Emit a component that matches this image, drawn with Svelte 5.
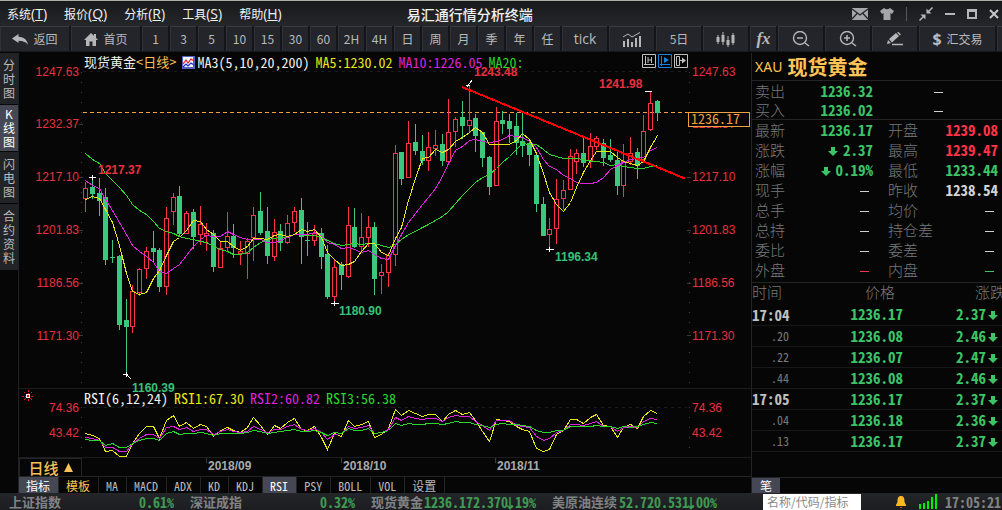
<script>
  const menus = [
    ['系统', 'T'], ['报价', 'Q'], ['分析', 'R'], ['工具', 'S'], ['帮助', 'H']
  ];
  const periods = ['1', '3', '5', '10', '15', '30', '60', '2H', '4H', '日', '周', '月', '季', '年', '任'];
  const views = ['分时图', 'K线图', '闪电图', '合约资料'];
  const indicators = ['指标', '模板', 'MA', 'MACD', 'ADX', 'KD', 'KDJ', 'RSI', 'PSY', 'BOLL', 'VOL', '设置'];

  // One row per trading day: wick top, body top, body bottom, wick bottom, rising.
  const candles = [
    [182, 188, 199, 212, 1], [177, 187, 194, 199, 0], [178, 193, 201, 216, 0], [188, 197, 260, 265, 0],
    [240, 257, 258, 263, 0], [255, 256, 325, 330, 0], [299, 320, 327, 374, 0], [285, 291, 327, 333, 1],
    [268, 269, 293, 296, 1], [247, 251, 269, 279, 1], [231, 248, 252, 262, 0], [248, 250, 287, 292, 0],
    [207, 218, 287, 295, 1], [193, 197, 212, 225, 1], [186, 196, 234, 237, 0], [211, 213, 234, 234, 1],
    [209, 212, 237, 249, 0], [206, 224, 235, 245, 1], [223, 233, 236, 251, 1], [230, 233, 267, 272, 0],
    [241, 248, 268, 268, 1], [212, 236, 248, 252, 1], [224, 236, 248, 258, 0], [241, 251, 254, 265, 1],
    [238, 241, 254, 279, 1], [207, 215, 238, 261, 1], [192, 211, 233, 235, 0], [207, 231, 256, 264, 0],
    [219, 232, 257, 261, 1], [224, 231, 243, 251, 0], [215, 223, 243, 244, 1], [207, 211, 223, 232, 1],
    [198, 210, 237, 264, 0], [222, 240, 241, 256, 0], [225, 233, 241, 246, 1], [228, 233, 257, 269, 0],
    [245, 254, 297, 299, 0], [259, 267, 297, 302, 1], [262, 264, 275, 290, 0], [207, 225, 277, 278, 1],
    [208, 227, 247, 248, 0], [213, 237, 247, 251, 1], [216, 227, 238, 247, 1], [222, 227, 279, 295, 0],
    [264, 272, 276, 294, 1], [253, 255, 273, 287, 1], [145, 153, 255, 266, 1], [152, 152, 179, 185, 0],
    [121, 143, 178, 178, 1], [124, 142, 151, 155, 0], [135, 151, 161, 165, 0], [132, 147, 161, 171, 1],
    [130, 145, 149, 156, 1], [134, 144, 161, 166, 0], [99, 132, 162, 162, 1], [117, 119, 132, 147, 1],
    [101, 117, 126, 139, 0], [86, 120, 126, 132, 1], [114, 118, 136, 152, 0], [132, 132, 158, 167, 0],
    [156, 157, 187, 195, 0], [107, 121, 186, 186, 1], [111, 120, 124, 134, 0], [114, 121, 129, 143, 0],
    [113, 126, 143, 155, 0], [113, 141, 146, 157, 0], [142, 143, 155, 166, 0], [153, 155, 204, 212, 0],
    [197, 204, 236, 236, 0], [218, 229, 235, 249, 1], [179, 199, 229, 244, 1], [180, 190, 199, 209, 1],
    [149, 156, 190, 190, 1], [149, 153, 162, 174, 1], [138, 153, 163, 167, 0], [133, 146, 161, 168, 1],
    [136, 138, 147, 150, 1], [139, 143, 158, 166, 0], [139, 155, 160, 162, 0], [152, 160, 186, 195, 0],
    [144, 161, 186, 197, 1], [137, 153, 162, 165, 1], [148, 152, 166, 179, 0], [115, 131, 160, 160, 1],
    [91, 103, 130, 131, 1], [100, 101, 113, 121, 0]
  ];

  const averages = [
    ['#2bd72b', [153,159,163,173,180,187,195,204,210,214,221,228,231,233,236,238,239,241,242,246,249,251,254,254,252,247,242,239,238,237,237,234,234,235,235,237,240,243,245,244,243,244,243,243,245,247,244,239,234,231,227,224,220,216,211,203,195,188,182,177,174,168,162,156,149,143,144,144,149,154,156,158,158,158,159,161,161,162,165,164,166,167,168,168,166,165]],
    ['#dd22dd', [180,185,188,199,210,222,234,245,251,256,262,271,273,268,264,255,246,239,235,236,236,231,234,237,239,239,239,242,242,240,237,234,234,234,232,236,242,244,248,247,249,252,250,254,258,259,245,234,222,213,204,197,188,176,163,150,146,140,139,141,142,141,139,135,136,137,141,147,159,166,169,175,178,182,183,183,182,177,169,165,162,159,158,157,150,147]],
    ['#e6e619', [199,196,198,209,222,245,273,291,294,292,278,270,255,241,237,230,220,221,229,234,241,241,246,250,246,238,238,239,235,234,236,234,229,231,229,237,252,259,265,264,261,251,243,243,252,255,238,227,200,178,158,157,149,152,149,141,137,132,127,132,144,144,144,144,140,133,139,153,173,192,204,211,202,187,172,160,151,151,151,157,161,163,165,161,147,135]]
  ];

  const strengths = [
    ['#e6e619', [433,435,438,451,450,456,456,443,433,426,426,438,420,415,426,422,428,424,426,436,430,427,430,432,427,417,425,434,425,428,422,418,429,430,426,437,449,433,436,420,426,424,421,437,434,428,409,415,410,413,416,414,414,421,414,410,414,412,420,431,441,419,420,421,426,429,431,448,451,449,434,430,419,419,423,417,414,425,426,437,427,424,428,416,410,413]],
    ['#dd22dd', [437,438,440,447,447,451,451,443,438,434,434,438,427,426,429,427,431,429,429,434,431,429,431,432,431,426,429,432,429,429,426,424,429,430,428,432,439,434,433,426,428,427,425,433,432,429,417,420,416,418,419,418,418,421,417,415,416,416,421,425,430,420,420,420,425,426,427,436,440,438,432,430,424,424,425,423,421,426,426,431,427,426,427,421,418,419]],
    ['#2bd72b', [439,440,440,445,443,447,447,443,440,438,438,440,433,431,434,433,433,432,433,435,433,433,433,433,432,430,431,433,432,431,430,429,431,431,430,432,435,432,433,428,430,430,428,433,432,430,423,425,423,424,424,423,423,424,423,421,422,422,424,425,427,424,423,424,424,425,426,430,432,432,430,430,426,426,426,426,425,426,426,428,426,427,426,424,422,423]]
  ];

  const dayX = (i) => Math.round(85.3 + 6.725 * i);
  const points = (ys) => ys.map((y, i) => `${dayX(i) + 0.5},${y + 0.5}`).join(' ');

  const scale = [
    ['1247.63', 76], ['1232.37', 128], ['1217.10', 181], ['1201.83', 234],
    ['1186.56', 287], ['1171.30', 340], ['74.36', 412], ['43.42', 437]
  ];
  const extremes = [
    ['1217.37', 98, 174, 'up'], ['1243.48', 474, 76, 'up'], ['1241.98', 599, 88, 'up'],
    ['1180.90', 339, 315, 'down'], ['1196.34', 555, 261, 'down'], ['1160.39', 132, 392, 'down']
  ];

  const quote = [
    ['最新', '1236.17', 'down', '开盘', '1239.08', 'up'],
    ['涨跌', '2.37', 'down arrow', '最高', '1239.47', 'up'],
    ['涨幅', '0.19%', 'down arrow', '最低', '1233.44', 'down'],
    ['现手', '', '', '昨收', '1238.54', 'flat'],
    ['总手', '', '', '均价', '', ''],
    ['总持', '', '', '持仓差', '', ''],
    ['委比', '', '', '委差', '', ''],
    ['外盘', '', 'up', '内盘', '', 'down']
  ];
  const ticks = [
    ['17:04', '1236.17', '2.37'], ['.20', '1236.08', '2.46'], ['.22', '1236.07', '2.47'],
    ['.44', '1236.08', '2.46'], ['17:05', '1236.17', '2.37'], ['.04', '1236.18', '2.36'],
    ['.13', '1236.17', '2.37']
  ];
</script>

{#snippet fall()}
  <svg class="fall" width="10" height="9" viewBox="0 0 10 9" aria-hidden="true"><path d="M3 0h4v4h3L5 9 0 4h3z" fill="#3cc466" /></svg>
{/snippet}

{#snippet figure(value, tone)}
  {#if value}
    {#if tone.includes('arrow')}{@render fall()}{/if}
    <b class={tone.split(' ')[0]}>{value}</b>
  {:else}
    <i class="dash {tone}"></i>
  {/if}
{/snippet}

<div class="terminal">
  <header class="titlebar">
    <nav class="menu">
      {#each menus as [name, key]}
        <button>{name}<span>(<u>{key}</u>)</span></button>
      {/each}
    </nav>
    <h1>易汇通行情分析终端</h1>
    <div class="window-tools">
      <button aria-label="邮件"><svg width="16" height="12" viewBox="0 0 16 12"><rect width="16" height="12" fill="#a4a6aa" /><path d="M0 1l8 6 8-6M0 11l5.500-6M16 11l-5.500-6" fill="none" stroke="#222427" stroke-width="1.300" /></svg></button>
      <button aria-label="皮肤"><svg width="14" height="12" viewBox="0 0 14 12"><path d="M4 0q3 2.500 6 0l4 3-2 3-1.500-1V12h-7V5L2 6 0 3z" fill="#a4a6aa" /></svg></button>
      <span class="rule"></span>
      <button aria-label="还原"><svg width="14" height="14" viewBox="0 0 14 14"><path d="M13.500.5L9 5M.5 13.500L5 9" stroke="#b4b6b8" stroke-width="1.500" /><path d="M7.500 1.500v5h5zM6.500 12.500v-5h-5z" fill="#b4b6b8" /></svg></button>
      <button aria-label="最小化"><svg width="10" height="10" viewBox="0 0 10 10"><path d="M0 4h10v2H0z" fill="#b4b6b8" /></svg></button>
      <button aria-label="最大化"><svg width="10" height="10" viewBox="0 0 10 10"><path d="M0 0h10v10H0zM2 3v5h6V3z" fill="#b4b6b8" fill-rule="evenodd" /></svg></button>
      <button aria-label="关闭"><svg width="10" height="10" viewBox="0 0 10 10"><path d="M1 1l8 8M9 1L1 9" stroke="#c4c6c8" stroke-width="2" /></svg></button>
    </div>
  </header>

  <div class="toolbar">
    <button class="wide"><svg width="16" height="11" viewBox="0 0 16 11"><path d="M0 4.500L6.500 0v2.700c5 .2 8.500 2.500 9.500 8-2.500-3-5-4-9.500-4V9z" fill="#b4b6b8" /></svg>返回</button>
    <button class="wide"><svg width="14" height="13" viewBox="0 0 14 13"><path d="M7 0l3 2.800V1h2v3.700L14 7h-2v6H8.500V8.500h-3V13H2V7H0z" fill="#b4b6b8" /></svg>首页</button>
    {#each periods as period}
      <button>{period}</button>
    {/each}
    <button class="mid tick">tick</button>
    <button class="mid" aria-label="指标图"><svg width="20" height="15" viewBox="0 0 20 15"><path d="M2 15V9M6 15V7M10 15v-5M14 15V6M18 15V4" stroke="#b4b6b8" stroke-width="2" /><path d="M1 5l5-3 4 3 8-4.500" fill="none" stroke="#b4b6b8" /></svg></button>
    <button class="mid">5日</button>
    <button class="mid" aria-label="K线"><svg width="20" height="15" viewBox="0 0 20 15"><path d="M2 3v9M7 0v13M12 4v11M17 1v12" stroke="#b4b6b8" /><path d="M2 5v5M7 3v7M12 8v5M17 3v8" stroke="#b4b6b8" stroke-width="3" /></svg></button>
    <button class="fx">fx</button>
    <button class="mid" aria-label="缩小"><svg width="18" height="16" viewBox="0 0 18 16"><circle cx="8" cy="7" r="6.500" fill="none" stroke="#b4b6b8" stroke-width="1.400" /><path d="M5 7h6M13 12l4 3" stroke="#b4b6b8" stroke-width="1.500" /></svg></button>
    <button class="mid" aria-label="放大"><svg width="18" height="16" viewBox="0 0 18 16"><circle cx="8" cy="7" r="6.500" fill="none" stroke="#b4b6b8" stroke-width="1.400" /><path d="M5 7h6M8 4v6M13 12l4 3" stroke="#b4b6b8" stroke-width="1.500" /></svg></button>
    <button class="mid" aria-label="画线"><svg width="16" height="14" viewBox="0 0 16 14"><path d="M0 12l1-4 3 3zM2 7l7-6 3 3-7 6.500z" fill="#b4b6b8" /><path d="M10 0.500l1.500-.5L14 2.500l-1.200 1z" fill="#b4b6b8" /><path d="M5 12.500h11" stroke="#b4b6b8" stroke-width="1.500" /></svg></button>
    <button class="trade"><b>$</b>汇交易</button>
    <button class="rest" aria-label="更多"></button>
  </div>

  <div class="workspace">
    <nav class="views">
      {#each views as view}
        <button class:active={view === 'K线图'}>{#each [...view] as char}<span>{char}</span>{/each}</button>
      {/each}
    </nav>

    <main>
      <div class="chart">
        <svg class="plot" viewBox="19 53 732 405" role="img" aria-label="现货黄金日线">
          <g shape-rendering="crispEdges">
            <g stroke="#1c1c1f" fill="none">
              <path d="M83 71.500H687M83 407.500H687" stroke-dasharray="3 4" />
              <path d="M19 388.500H751M19 457.500H751" />
              <path d="M81.500 72V388M689.500 72V388M81.500 407V456M689.500 407V456" stroke-dasharray="1 9" stroke="#3a3a3e" />
              <path d="M79 124.500h4M79 177.500h4M79 230.500h4M79 283.500h4M79 335.500h4M687 177.500h4M687 230.500h4M687 283.500h4M687 335.500h4" stroke="#3a3a3e" />
            </g>
            <path d="M83 112.500H688" stroke="#f0a040" stroke-dasharray="4 3" />
            {#each candles as [high, top, bottom, low, rising], i}
              {#if rising}
                <rect x={dayX(i)} y={high} width="1" height={top - high} fill="#ff3348" />
                <rect x={dayX(i)} y={bottom} width="1" height={low - bottom} fill="#ff3348" />
                <rect x={dayX(i) - 1.5} y={top + 0.5} width="4" height={bottom - top - 1} fill="none" stroke="#ff3348" />
              {:else}
                <rect x={dayX(i)} y={high} width="1" height={low - high} fill="#3cc87c" />
                <rect x={dayX(i) - 2} y={top} width="5" height={bottom - top} fill="#3cc87c" />
              {/if}
            {/each}
            {#each [...averages, ...strengths] as [colour, ys]}
              <polyline points={points(ys)} fill="none" stroke={colour} />
            {/each}
            <path d="M462 87L685 178.500" stroke="#ff0000" stroke-width="2" />
            <g stroke="#ffffff" fill="none">
              <path d="M89 177.500h7M92.500 175v5M331 303.500h8M334.500 301v5M546 249.500h8M549.500 247v5M645 91.500h7M123 374.500h5M126.500 372v5M127 375l4 4M472 80l-5 7M466 85.500h4" />
            </g>
          </g>
          <g shape-rendering="crispEdges">
            <path d="M22 396h12M28 390v12M24 392l8 8M32 392l-8 8" stroke="#e01818" stroke-dasharray="2 1" />
            <rect x="26" y="394" width="4" height="4" fill="#ffffff" /><rect x="27" y="395" width="2" height="2" fill="#ff0000" />
          </g>
          {#each scale as [value, y]}
            <text class="up" x="79" {y} text-anchor="end">{value}</text>
            <text class="up" x="692" {y}>{value}</text>
          {/each}
          {#each extremes as [value, x, y, tone]}
            <text class="bold {tone}" {x} {y}>{value}</text>
          {/each}
          <rect x="688.500" y="112.500" width="61" height="14" fill="#060606" stroke="#f0a040" />
          <text class="last" x="691" y="124">1236.17</text>
        </svg>
        <div class="legend price">
          <span>现货黄金<span class="gold">&lt;日线&gt;</span></span>
          <svg width="13" height="13" viewBox="0 0 13 13" aria-hidden="true"><rect width="12" height="12" fill="#f4f4ff" stroke="#5560c0" stroke-width="2" /><path d="M1 8l3-4 2 3 3-4 3 2" fill="none" stroke="#e02020" stroke-width="1.200" /><path d="M1 11l3-3 2 2 3-3 3 2" fill="none" stroke="#2030d0" stroke-width="1.200" /></svg>
          <span class="mono">MA3(5,10,20,200)</span>
          <span class="mono yellow">MA5:1230.02</span>
          <span class="mono magenta">MA10:1226.05</span>
          <span class="mono green">MA20:</span>
        </div>
        <div class="pane-tools">
          <button aria-label="左缩放"><svg width="14" height="14" viewBox="0 0 14 14"><path d="M.5.5h13v13H.5z M3.500 2v9M2 10.500h10M6 3v6M9.500 3v6M6 6h3.500" fill="none" stroke="#c0c0c0" /></svg></button>
          <button aria-label="播放"><svg width="14" height="14" viewBox="0 0 14 14"><path d="M.5.5h13v13H.5z M3.500 2v10M2 10.500h10" fill="none" stroke="#1880d8" /><path d="M6 3v6l5-3z" fill="#1880d8" /></svg></button>
          <button aria-label="右移"><svg width="14" height="14" viewBox="0 0 14 14"><path d="M.5.5h13v13H.5z M2.500 2.500h3v9h-3zM5 6.500h6" fill="none" stroke="#c0c0c0" /><path d="M8 3.500v6l4-3z" fill="#c0c0c0" /></svg></button>
        </div>
        <div class="legend rsi">
          <span class="mono">RSI(6,12,24)</span>
          <span class="mono yellow">RSI1:67.30</span>
          <span class="mono magenta">RSI2:60.82</span>
          <span class="mono green">RSI3:56.38</span>
        </div>
      </div>
      <div class="timeline">
        <button>日线<svg width="9" height="9" viewBox="0 0 9 9" aria-hidden="true"><path d="M4.500 0L9 9H0z" fill="#f8c058" /></svg></button>
        <svg viewBox="82 458 669 18" preserveAspectRatio="xMinYMid meet" aria-label="时间轴">
          <path d="M206.500 458v5M341.500 458v5M495.500 458v5" stroke="#3a3a3e" />
          <text x="208" y="470">2018/09</text>
          <text x="343" y="470">2018/10</text>
          <text x="497" y="470">2018/11</text>
        </svg>
      </div>
      <nav class="tabs">
        {#each indicators as name}
          <button class:active={name === '指标' || name === 'RSI'} class:gold={name === '模板'} class:cjk={name > '~'}>{name}</button>
        {/each}
      </nav>
    </main>

    <aside>
      <h2><span>XAU</span>现货黄金</h2>
      <table class="quote deal">
        <tbody>
          <tr><th>卖出</th><td><b class="down">1236.32</b></td><td>{@render figure('', '')}</td></tr>
          <tr><th>买入</th><td><b class="down">1236.02</b></td><td>{@render figure('', '')}</td></tr>
        </tbody>
      </table>
      <table class="quote detail">
        <tbody>
          {#each quote as [left, value, tone, right, value2, tone2]}
            <tr>
              <th>{left}</th><td>{@render figure(value, tone)}</td>
              <th class="second">{right}</th><td>{@render figure(value2, tone2)}</td>
            </tr>
          {/each}
        </tbody>
      </table>
      <table class="ticks">
        <thead><tr><th>时间</th><th>价格</th><th>涨跌</th></tr></thead>
        <tbody>
          {#each ticks as [time, price, change]}
            <tr>
              <td class:minute={time.length > 3}>{time}</td>
              <td><b class="down">{price}</b></td>
              <td><b class="down">{change}</b>{@render fall()}</td>
            </tr>
          {/each}
        </tbody>
      </table>
      <div class="pens"><button>笔</button></div>
    </aside>
  </div>

  <footer>
    <div class="item"><span>上证指数</span><b>0.61%</b></div>
    <div class="item"><span>深证成指</span><b>0.32%</b></div>
    <div class="item"><span>现货黄金</span><b>1236.172.37<em>0</em>.19%</b></div>
    <div class="item"><span>美原油连续</span><b>52.720.53<em>1</em>.00%</b></div>
    <div class="extras">
      <input type="text" placeholder="名称/代码/指标" aria-label="名称/代码/指标" />
      <svg class="bell" width="12" height="12" viewBox="0 0 12 12" aria-hidden="true"><path d="M6 0c3 0 3.500 2.500 3.500 6L11 9v1H1V9l1.500-3C2.500 2.500 3 0 6 0z" fill="#ffb820" /><path d="M5 11h2v1H5z" fill="#e04020" /></svg>
      <svg class="signal" width="18" height="15" viewBox="0 0 18 15" aria-hidden="true"><path d="M1 15v-5M5 15V9M9 15V7M13 15V3M17 15V0" stroke="#00f000" stroke-width="2" /></svg>
      <time>17:05:21</time>
    </div>
  </footer>
</div>

<style>
  :global(body) {
    margin: 0;
    background: #060606;
  }
  .terminal {
    --cjk: "Noto Sans CJK SC", sans-serif;
    --mono: "Noto Sans Mono CJK SC", "Liberation Mono", monospace;
    --line: #242427;
    display: flex;
    flex-direction: column;
    height: 100vh;
    overflow: hidden;
    background: #060606;
    color: #b8babc;
    font: 12px/14px var(--cjk);
  }
  button {
    padding: 0;
    border: 0;
    background: none;
    color: inherit;
    font: inherit;
  }
  svg {
    display: block;
    flex: none;
  }
  h1, h2 {
    margin: 0;
  }
  .up { color: #ff3348; fill: #e8303f; }
  .down { color: #3cc466; fill: #38c078; }
  .flat { color: #d4d4d4; }
  .gold { color: #f8c058; }

  .titlebar {
    display: grid;
    grid-template-columns: 13fr auto 15fr;
    align-items: center;
    box-sizing: border-box;
    height: 26px;
    flex: none;
    border-top: 1px solid #a9b0aa;
    background: linear-gradient(#17191b, #24262a);
    color: #f0f0f0;
  }
  .menu {
    display: flex;
    gap: 17px;
    padding-left: 7px;
  }
  .menu button {
    white-space: nowrap;
  }
  .menu span {
    font: 14px/14px "Open Sans", sans-serif;
  }
  h1 {
    font: 500 14px/18px var(--cjk);
  }
  .window-tools {
    display: flex;
    align-items: center;
    justify-content: flex-end;
    gap: 12px;
    padding-right: 3px;
  }
  .rule {
    width: 1px;
    height: 14px;
    background: #55575a;
  }

  .toolbar {
    display: flex;
    gap: 2px;
    height: 25px;
    flex: none;
    overflow: hidden;
    border-bottom: 1px solid #17181b;
    background: #141518;
  }
  .toolbar button {
    display: flex;
    align-items: center;
    justify-content: center;
    flex: none;
    box-sizing: border-box;
    width: 26px;
    gap: 5px;
    border-top: 1px solid #3a3b40;
    border-left: 1px solid #303136;
    background: linear-gradient(#232429, #25262b);
  }
  .toolbar .wide { width: 69px; }
  .toolbar .mid { width: 45px; }
  .toolbar .trade { width: 76px; }
  .toolbar .rest { flex: 1; width: auto; }
  .toolbar .tick { font: 500 14px/16px "Open Sans", sans-serif; }
  .toolbar .fx { font: italic bold 17px/16px "Liberation Serif", serif; }
  .trade b { font: bold 16px/16px "Open Sans", sans-serif; }

  .workspace {
    display: flex;
    flex: 1;
    min-height: 0;
    padding-top: 1px;
  }
  .views {
    display: flex;
    flex-direction: column;
    align-items: stretch;
    gap: 1px;
    width: 18px;
    flex: none;
    border-right: 1px solid #202124;
  }
  .views button {
    padding: 5px 0 4px;
    background: #222327;
  }
  .views button:last-child {
    padding-bottom: 5px;
  }
  .views .active {
    padding: 2px 0 2px;
    background: #454754;
    color: #ffffff;
  }
  .views span {
    display: block;
    line-height: 14px;
  }

  main {
    display: flex;
    flex-direction: column;
    flex: 1;
    min-width: 0;
  }
  .chart {
    position: relative;
    flex: 1;
    min-height: 0;
  }
  .plot {
    width: 100%;
    height: 100%;
  }
  text {
    font: 12px "Liberation Sans", sans-serif;
  }
  .bold {
    font-weight: bold;
  }
  .last {
    fill: #f0a040;
    font: 14px var(--mono);
  }
  .legend {
    position: absolute;
    left: 65px;
    display: flex;
    align-items: center;
    gap: 6px;
    color: #f0f0f0;
    font: 13px/16px var(--cjk);
    white-space: nowrap;
  }
  .legend svg { margin-right: -4px; }
  .price { top: 1px; }
  .rsi { top: 337px; }
  .mono { font: 14px/16px var(--mono); }
  .yellow { color: #e6e619; }
  .magenta { color: #dd22dd; }
  .green { color: #2bd72b; }
  .pane-tools {
    position: absolute;
    top: 1px;
    right: 63px;
    display: flex;
    gap: 2px;
  }

  .timeline {
    display: flex;
    height: 19px;
    flex: none;
    border-bottom: 1px solid var(--line);
    box-sizing: border-box;
  }
  .timeline button {
    display: flex;
    align-items: center;
    justify-content: center;
    gap: 5px;
    box-sizing: border-box;
    width: 63px;
    flex: none;
    border: 1px solid var(--line);
    border-bottom: 0;
    color: #f8c058;
    font: 500 15px/16px var(--cjk);
  }
  .timeline > svg {
    flex: 1;
    min-width: 0;
  }
  .timeline text {
    fill: #a8aaad;
    font-weight: bold;
  }
  .tabs {
    display: flex;
    height: 16px;
    flex: none;
  }
  .tabs button {
    padding: 0 8px 0 7px;
    border-right: 1px solid var(--line);
    font: 12px/15px var(--mono);
  }
  .tabs .cjk { font: 12px/15px var(--cjk); }
  .tabs .active { background: #454754; color: #ffffff; }
  .tabs .gold { color: #f8c058; }

  aside {
    display: flex;
    flex-direction: column;
    box-sizing: border-box;
    width: 251px;
    flex: none;
    overflow: hidden;
    border-left: 1px solid var(--line);
  }
  h2 {
    display: flex;
    align-items: center;
    gap: 5px;
    height: 27px;
    flex: none;
    padding-left: 3px;
    color: #ffc457;
    font: bold 20px/26px var(--cjk);
  }
  h2 span {
    font: 14px/26px "Noto Sans", sans-serif;
  }
  table {
    width: 100%;
    border-collapse: collapse;
    table-layout: fixed;
    border-top: 1px solid var(--line);
  }
  th, td {
    padding: 0;
    white-space: nowrap;
  }
  aside b {
    font: bold 15px/16px var(--mono);
  }
  .quote tr { height: 20px; }
  .quote.deal tr { height: 19px; }
  .detail { margin-bottom: 2px; }
  .quote th {
    width: 50px;
    padding-left: 3px;
    color: #77797b;
    font: 300 15px/18px var(--cjk);
    text-align: left;
  }
  .quote td {
    width: 68px;
    padding-top: 2px;
    text-align: right;
    line-height: 16px;
  }
  .quote .second { padding-left: 15px; width: 52px; }
  .quote td:last-child {
    width: auto;
    padding-right: 4px;
  }
  .quote.deal td:last-child { padding-right: 55px; }
  .fall {
    display: inline-block;
    margin: 0 2px;
  }
  .dash {
    display: inline-block;
    width: 9px;
    height: 1px;
    margin: 0 4px 7px 0;
    background: #d0d0d0;
    vertical-align: bottom;
  }
  .dash.up { background: #ff3348; }
  .dash.down { background: #3cc466; }

  .ticks th {
    height: 22px;
    color: #77797b;
    font: 300 15px/18px var(--cjk);
    text-align: right;
    vertical-align: top;
  }
  .ticks th:nth-child(1) { width: 37px; text-align: left; }
  .ticks th:nth-child(2) { width: 106px; padding-right: 8px; }
  .ticks th:nth-child(3) { padding-left: 72px; overflow: hidden; text-align: left; }
  .ticks tbody tr {
    height: 21px;
    border-bottom: 1px solid #18181a;
  }
  .ticks td {
    color: #77797b;
    font: 12px/16px var(--mono);
    text-align: right;
  }
  .ticks .minute {
    color: #c0c0c0;
    font: bold 15px/16px var(--mono);
  }
  .ticks td:nth-child(3) { padding-right: 2px; }
  .pens {
    margin-top: auto;
    border-top: 1px solid var(--line);
  }
  .pens button {
    display: block;
    width: 28px;
    height: 15px;
    background: #454754;
    color: #ffffff;
  }

  footer {
    display: flex;
    align-items: center;
    gap: 16px;
    height: 17px;
    flex: none;
    padding-left: 9px;
    background: linear-gradient(#242529, #1c1d20);
    color: #808284;
    font: bold 13px/16px var(--cjk);
    white-space: nowrap;
  }
  .item {
    display: flex;
    justify-content: space-between;
    width: 165px;
    flex: none;
  }
  .item b {
    color: #3f9a52;
    font: bold 14px/16px var(--mono);
  }
  em {
    position: relative;
    font-style: normal;
  }
  em::after {
    content: "↓";
    position: absolute;
    left: 2px;
  }
  .extras {
    display: flex;
    align-items: center;
    flex: none;
    width: 239px;
    margin-left: auto;
  }
  input {
    box-sizing: border-box;
    width: 98px;
    height: 16px;
    margin: 1px 34px 0 0;
    padding: 0 4px;
    border: 0;
    border-radius: 0;
    background: #ffffff;
    font: 12px/16px var(--cjk);
  }
  input::placeholder { color: #8a8a8a; }
  .signal { margin: 0 8px 0 12px; }
  time {
    font: bold 14px/16px var(--mono);
  }
</style>
